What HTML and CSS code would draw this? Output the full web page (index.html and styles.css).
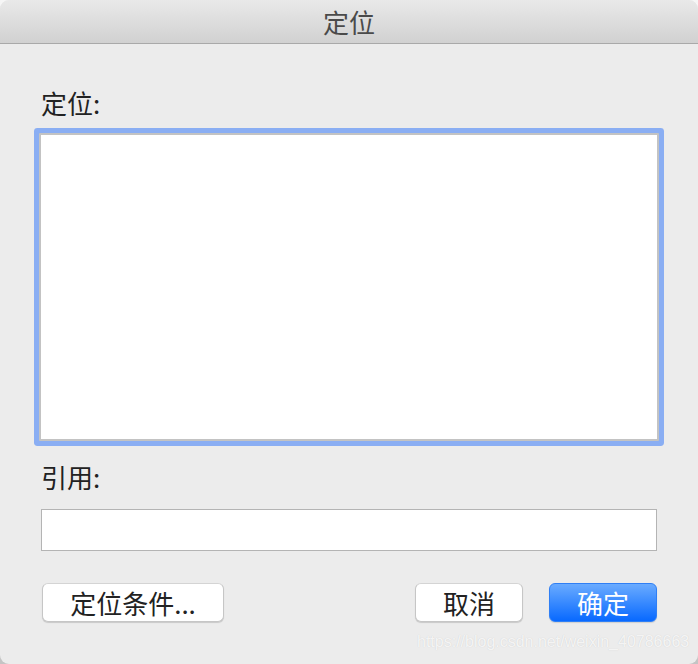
FILE: index.html
```html
<!DOCTYPE html>
<html>
<head>
    <meta charset="UTF-8">
    <title>定位</title>
    <link rel="stylesheet" href="styles.css">
</head>
<body>
    <div class="window">
        <div class="titlebar">定位</div>

        <div class="content">
            <label class="field-label">定位:</label>
            <div class="list-box" tabindex="0"></div>

            <label class="field-label ref-label">引用:</label>
            <input type="text" class="ref-input" />

            <div class="button-row">
                <button class="btn btn-plain btn-special">定位条件...</button>
                <div class="button-group">
                    <button class="btn btn-plain btn-small">取消</button>
                    <button class="btn btn-primary btn-small">确定</button>
                </div>
            </div>
        </div>

        <div class="watermark">https://blog.csdn.net/weixin_40786663</div>
    </div>
</body>
</html>
```

FILE: styles.css
```css
html, body {
    margin: 0;
    padding: 0;
}
body {
    width: 698px;
    height: 664px;
    overflow: hidden;
    background: linear-gradient(#f6f6f6, #c4c4c4);
    font-family: "Noto Sans CJK SC", "Noto Sans", sans-serif;
}
.window {
    position: relative;
    width: 698px;
    height: 664px;
    background: #ececec;
    border-radius: 9px;
    overflow: hidden;
}
.titlebar {
    height: 43px;
    line-height: 43px;
    text-align: center;
    font-size: 26px;
    color: #4a4a4a;
    background: linear-gradient(#e9e9e9, #d1d1d1);
    border-bottom: 1px solid #a9a9a9;
}
.content {
    padding: 43px 41px 0 41px;
}
.field-label {
    display: block;
    font-size: 26px;
    line-height: 32px;
    color: #222;
}
.list-box {
    margin: 14px -2px 0 -2px;
    height: 308px;
    box-sizing: border-box;
    background: white;
    border: 2px solid #c3c3c3;
    border-radius: 1px;
    box-shadow: 0 0 0 5px #8aaef3;
    outline: none;
}
.ref-label {
    margin-top: 20px;
}
.ref-input {
    display: block;
    margin-top: 16px;
    width: 616px;
    height: 42px;
    box-sizing: border-box;
    border: 1px solid #b4b4b4;
    background: white;
    padding: 0 6px;
    font-size: 16px;
    outline: none;
}
.button-row {
    display: flex;
    justify-content: space-between;
    margin-top: 32px;
    padding-left: 1px;
}
.button-group {
    display: flex;
    gap: 26px;
}
.btn {
    height: 39px;
    box-sizing: border-box;
    border-radius: 6px;
    font-family: inherit;
    font-size: 26px;
    line-height: 37px;
    padding: 0;
    cursor: pointer;
}
.btn-special { width: 182px; }
.btn-small { width: 108px; }
.btn-plain {
    background: white;
    color: #222;
    border: 1px solid #c6c6c6;
    border-top-color: #d4d4d4;
    box-shadow: 0 1px 1px rgba(0,0,0,0.15);
}
.btn-primary {
    background: linear-gradient(#6aabff, #0869ff);
    color: white;
    border: 1px solid #2f7ff5;
    box-shadow: 0 1px 1px rgba(0,0,0,0.12);
}
.watermark {
    position: absolute;
    left: 417px;
    top: 633px;
    font-family: "Liberation Sans", Arial, sans-serif;
    font-size: 16px;
    color: rgba(255,255,255,0.8);
    text-shadow: 0 0 1px rgba(0,0,0,0.15);
    white-space: nowrap;
}
```
